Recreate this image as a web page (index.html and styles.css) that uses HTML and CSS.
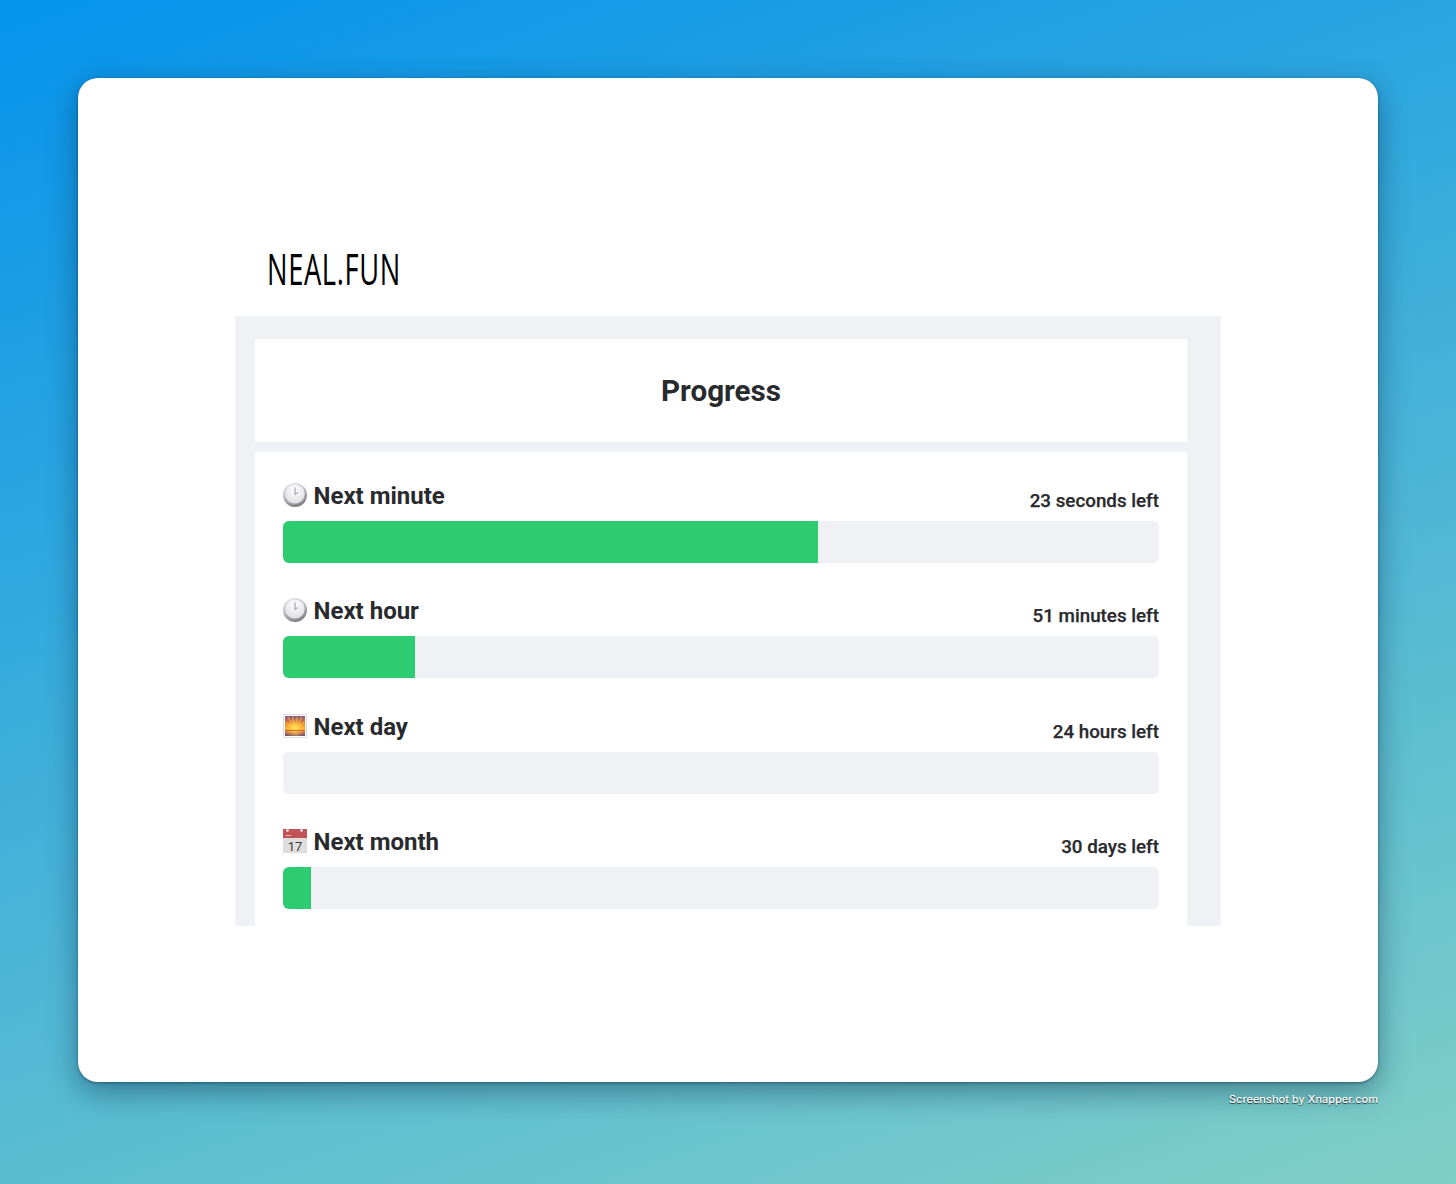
FILE: index.html
```html
<!DOCTYPE html>
<html lang="en">
<head>
    <meta charset="UTF-8">
    <title>Progress - Neal.fun</title>
    <link rel="stylesheet" href="styles.css">
</head>
<body>
    <svg class="defs" width="0" height="0">
        <defs>
            <radialGradient id="clockRim" cx="40%" cy="25%" r="85%">
                <stop offset="0%" stop-color="#f4f4f6"/>
                <stop offset="55%" stop-color="#c4c4ca"/>
                <stop offset="100%" stop-color="#5f5f68"/>
            </radialGradient>
            <radialGradient id="clockFace" cx="50%" cy="30%" r="75%">
                <stop offset="0%" stop-color="#ffffff"/>
                <stop offset="100%" stop-color="#dcdce2"/>
            </radialGradient>
            <linearGradient id="sunSky" x1="0" y1="0" x2="0" y2="1">
                <stop offset="0%" stop-color="#7d5a86"/>
                <stop offset="30%" stop-color="#d9703f"/>
                <stop offset="62%" stop-color="#fdb52c"/>
                <stop offset="72%" stop-color="#f28a2c"/>
                <stop offset="100%" stop-color="#6f4a78"/>
            </linearGradient>
            <radialGradient id="sunGlow" cx="50%" cy="62%" r="50%">
                <stop offset="0%" stop-color="#ffe25a"/>
                <stop offset="100%" stop-color="#ffd04a" stop-opacity="0"/>
            </radialGradient>
            <symbol id="clock" viewBox="0 0 24 24">
                <circle cx="12" cy="12" r="12" fill="url(#clockRim)"/>
                <circle cx="12" cy="11" r="9.6" fill="url(#clockFace)"/>
                <path d="M12 11.5V4.5M12 11.5l3-2.2" stroke="#85858d" stroke-width="0.9" fill="none"/>
            </symbol>
            <symbol id="sunrise" viewBox="0 0 24 24">
                <rect x="0.5" y="0.5" width="23" height="23" fill="#fff" stroke="#dcdce2"/>
                <rect x="2" y="2" width="20" height="20" fill="url(#sunSky)"/>
                <path d="M12 15L5 3M12 15L9.5 2.5M12 15L14.5 2.5M12 15L19 3M12 15L2.5 8M12 15L21.5 8" stroke="#ffbe3c" stroke-width="1.2" opacity="0.75"/>
                <rect x="2" y="2" width="20" height="20" fill="url(#sunGlow)"/>
                <path d="M2 16.5h20" stroke="#d9682c" stroke-width="1"/>
            </symbol>
            <symbol id="calendar" viewBox="0 0 24 24">
                <rect x="0" y="0" width="24" height="24" fill="#dedede"/>
                <rect x="0" y="0" width="24" height="9" fill="#bf5358"/>
                <circle cx="4.5" cy="1.5" r="1.2" fill="#fff"/>
                <circle cx="18.5" cy="1.5" r="1.2" fill="#fff"/>
                <path d="M3 6.5h5" stroke="#eab4b6" stroke-width="1"/>
                <text x="12" y="22" class="cal-day" text-anchor="middle">17</text>
            </symbol>
        </defs>
    </svg>

    <div class="window">
        <div class="logo">NEAL.FUN</div>
        <div class="panel">
            <div class="card title-card">
                <h1>Progress</h1>
            </div>
            <div class="card list-card">
                <div class="row">
                    <div class="row-head">
                        <span class="row-label"><svg class="emoji"><use href="#clock"/></svg>Next minute</span>
                        <span class="row-left">23 seconds left</span>
                    </div>
                    <div class="bar"><div class="bar-fill" style="width: 61.1%"></div></div>
                </div>
                <div class="row">
                    <div class="row-head">
                        <span class="row-label"><svg class="emoji"><use href="#clock"/></svg>Next hour</span>
                        <span class="row-left">51 minutes left</span>
                    </div>
                    <div class="bar"><div class="bar-fill" style="width: 15.05%"></div></div>
                </div>
                <div class="row">
                    <div class="row-head">
                        <span class="row-label"><svg class="emoji"><use href="#sunrise"/></svg>Next day</span>
                        <span class="row-left">24 hours left</span>
                    </div>
                    <div class="bar"></div>
                </div>
                <div class="row">
                    <div class="row-head">
                        <span class="row-label"><svg class="emoji"><use href="#calendar"/></svg>Next month</span>
                        <span class="row-left">30 days left</span>
                    </div>
                    <div class="bar"><div class="bar-fill" style="width: 3.25%"></div></div>
                </div>
            </div>
        </div>
    </div>
    <div class="credit">Screenshot by Xnapper.com</div>
</body>
</html>
```

FILE: styles.css
```css
* {
    margin: 0;
    padding: 0;
    box-sizing: border-box;
}

html, body {
    height: 1184px;
    overflow: hidden;
}

body {
    padding: 78px 78px 0;
    background: linear-gradient(161deg, #0593ec 0%, #80cfc6 100%);
    font-family: Roboto, Arial, sans-serif;
    color: #292a2d;
}

.defs {
    position: absolute;
}

.window {
    height: 1004px;
    padding: 158px 157px 0;
    background: #fff;
    border-radius: 20px;
    box-shadow: 0 1px 3px rgba(0, 30, 60, 0.45), 0 10px 30px rgba(0, 30, 60, 0.42);
}

.logo {
    height: 80px;
    padding: 7px 0 0 32px;
    font-family: "Open Sans", Arial, sans-serif;
    font-size: 44px;
    font-weight: 400;
    line-height: 50px;
    letter-spacing: 1px;
    color: #000;
    transform: scaleX(0.62);
    transform-origin: 32px 0;
    white-space: nowrap;
}

.panel {
    width: 986px;
    height: 610px;
    padding: 23px 34px 0 20px;
    background: #f0f1f5;
    overflow: hidden;
}

.card {
    background: #fff;
}

.title-card {
    height: 103px;
    margin-bottom: 10px;
    display: flex;
    align-items: center;
    justify-content: center;
}

h1 {
    font-size: 29.6px;
    font-weight: 700;
    color: #292a2d;
}

.list-card {
    padding: 28px 28px 40px;
    display: flex;
    flex-direction: column;
    gap: 32.33px;
}

.row-head {
    height: 41px;
    display: flex;
    justify-content: space-between;
    align-items: baseline;
}

.row-label {
    display: flex;
    align-items: center;
    gap: 6.5px;
    font-size: 24px;
    font-weight: 700;
    line-height: 32px;
}

.row-left {
    margin-top: -4px;
    font-size: 18.8px;
    font-weight: 500;
    -webkit-text-stroke: 0.25px #292a2d;
}

.emoji {
    width: 24px;
    height: 24px;
    margin-top: -2px;
    flex-shrink: 0;
}

.cal-day {
    font-family: Roboto, Arial, sans-serif;
    font-size: 13px;
    font-weight: 400;
    fill: #3a3a3e;
}

.bar {
    height: 42px;
    background: #f0f1f5;
    border-radius: 6px;
    overflow: hidden;
}

.bar-fill {
    height: 100%;
    background: #2ecc71;
}

.credit {
    margin-top: 10px;
    text-align: right;
    font-family: Inter, Roboto, Arial, sans-serif;
    font-size: 11px;
    font-weight: 500;
    line-height: 14px;
    color: #fff;
    text-shadow: 0 1px 1px rgba(0, 0, 0, 0.75);
}
```
